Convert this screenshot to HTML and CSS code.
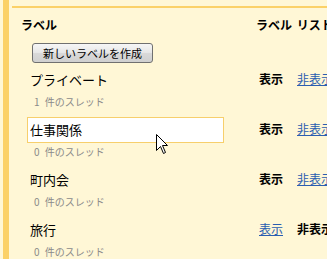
FILE: index.html
```html
<!DOCTYPE html>
<html lang="ja">
<head>
<meta charset="utf-8">
<link rel="stylesheet" href="styles.css">
</head>
<body>
<div class="frame">
  <div class="stripe"></div>
  <div class="panel">
    <div class="table">
      <div class="head head-left">ラベル</div>
      <div class="head head-right">ラベル リスト</div>

      <div class="btn-row"><button class="btn">新しいラベルを作成</button></div>
      <div></div>

      <div class="label">
        <div class="name">プライベート</div>
        <div class="count">1 件のスレッド</div>
      </div>
      <div class="actions"><span class="on">表示</span><a class="link">非表示</a></div>

      <div class="label">
        <div class="name edit">仕事関係</div>
        <div class="count">0 件のスレッド</div>
      </div>
      <div class="actions"><span class="on">表示</span><a class="link">非表示</a></div>

      <div class="label">
        <div class="name">町内会</div>
        <div class="count">0 件のスレッド</div>
      </div>
      <div class="actions"><span class="on">表示</span><a class="link">非表示</a></div>

      <div class="label">
        <div class="name">旅行</div>
        <div class="count">0 件のスレッド</div>
      </div>
      <div class="actions"><a class="link">表示</a><span class="on">非表示</span></div>
    </div>
  </div>
</div>
<svg class="cursor" width="13" height="21" viewBox="0 0 13 21">
  <path d="M0.5 0.5 L0.5 16.5 L4.5 12.5 L7.5 19.5 L9.5 18.5 L6.5 11.5 L11.5 11.5 Z" fill="#fff" stroke="#000" stroke-width="1" stroke-linejoin="miter"/>
</svg>
</body>
</html>
```

FILE: styles.css
```css
html, body {
  margin: 0;
  padding: 0;
  width: 327px;
  height: 259px;
  overflow: hidden;
  background: #fff7d6;
  font-family: "Noto Sans CJK JP", "Liberation Sans", sans-serif;
  color: #000;
}

.frame {
  display: flex;
  height: 259px;
  padding-left: 3px;
}

.stripe {
  width: 6px;
  background: #fbd168;
  flex: none;
}

.panel {
  flex: 1;
  margin-left: 3px;
  margin-top: 6px;
  border-top: 2px solid #fbd168;
  min-width: 0;
  overflow: hidden;
}

.table {
  display: grid;
  grid-template-columns: 243px auto;
}

.head {
  font-size: 12px;
  font-weight: bold;
  line-height: 18px;
  height: 18px;
  margin-top: 8px;
  white-space: nowrap;
}

.head-left {
  padding-left: 9px;
}

.head-right {
  padding-left: 1px;
  word-spacing: 2px;
}

.btn-row {
  padding-left: 20px;
  margin-top: 9px;
  height: 20px;
}

.btn {
  display: block;
  box-sizing: border-box;
  width: 121px;
  height: 20px;
  padding: 0;
  margin: 0;
  font-family: inherit;
  font-size: 11px;
  line-height: 18px;
  color: #000;
  border: 1px solid #707070;
  border-radius: 3px;
  background: linear-gradient(#f6f6f6, #e6e6e6 50%, #d9d9d9 51%, #d0d0d0);
}

.label {
  height: 50px;
  padding-left: 15px;
  display: flex;
  flex-direction: column;
}

.table > .label:nth-child(5) {
  margin-top: 6px;
}

.name {
  font-size: 13px;
  line-height: 22px;
  height: 22px;
  padding-left: 3px;
  white-space: nowrap;
}

.name.edit {
  box-sizing: border-box;
  width: 197px;
  height: 26px;
  line-height: 24px;
  margin-top: -2px;
  margin-bottom: -2px;
  padding-left: 2px;
  background: #fff;
  border: 1px solid #f7cf6c;
}

.count {
  margin-top: 3px;
  padding-left: 7px;
  font-size: 10px;
  line-height: 16px;
  color: #8a8a8a;
  white-space: nowrap;
  word-spacing: 3px;
}

.actions {
  padding-left: 4px;
  padding-top: 2px;
  font-size: 12px;
  line-height: 16px;
  white-space: nowrap;
  display: flex;
  gap: 14px;
}

.table > .actions:nth-child(6) {
  margin-top: 6px;
}

.on {
  font-weight: bold;
}

.link {
  color: #2a5db0;
  text-decoration: underline;
}

.cursor {
  position: absolute;
  left: 156px;
  top: 134px;
}
```
